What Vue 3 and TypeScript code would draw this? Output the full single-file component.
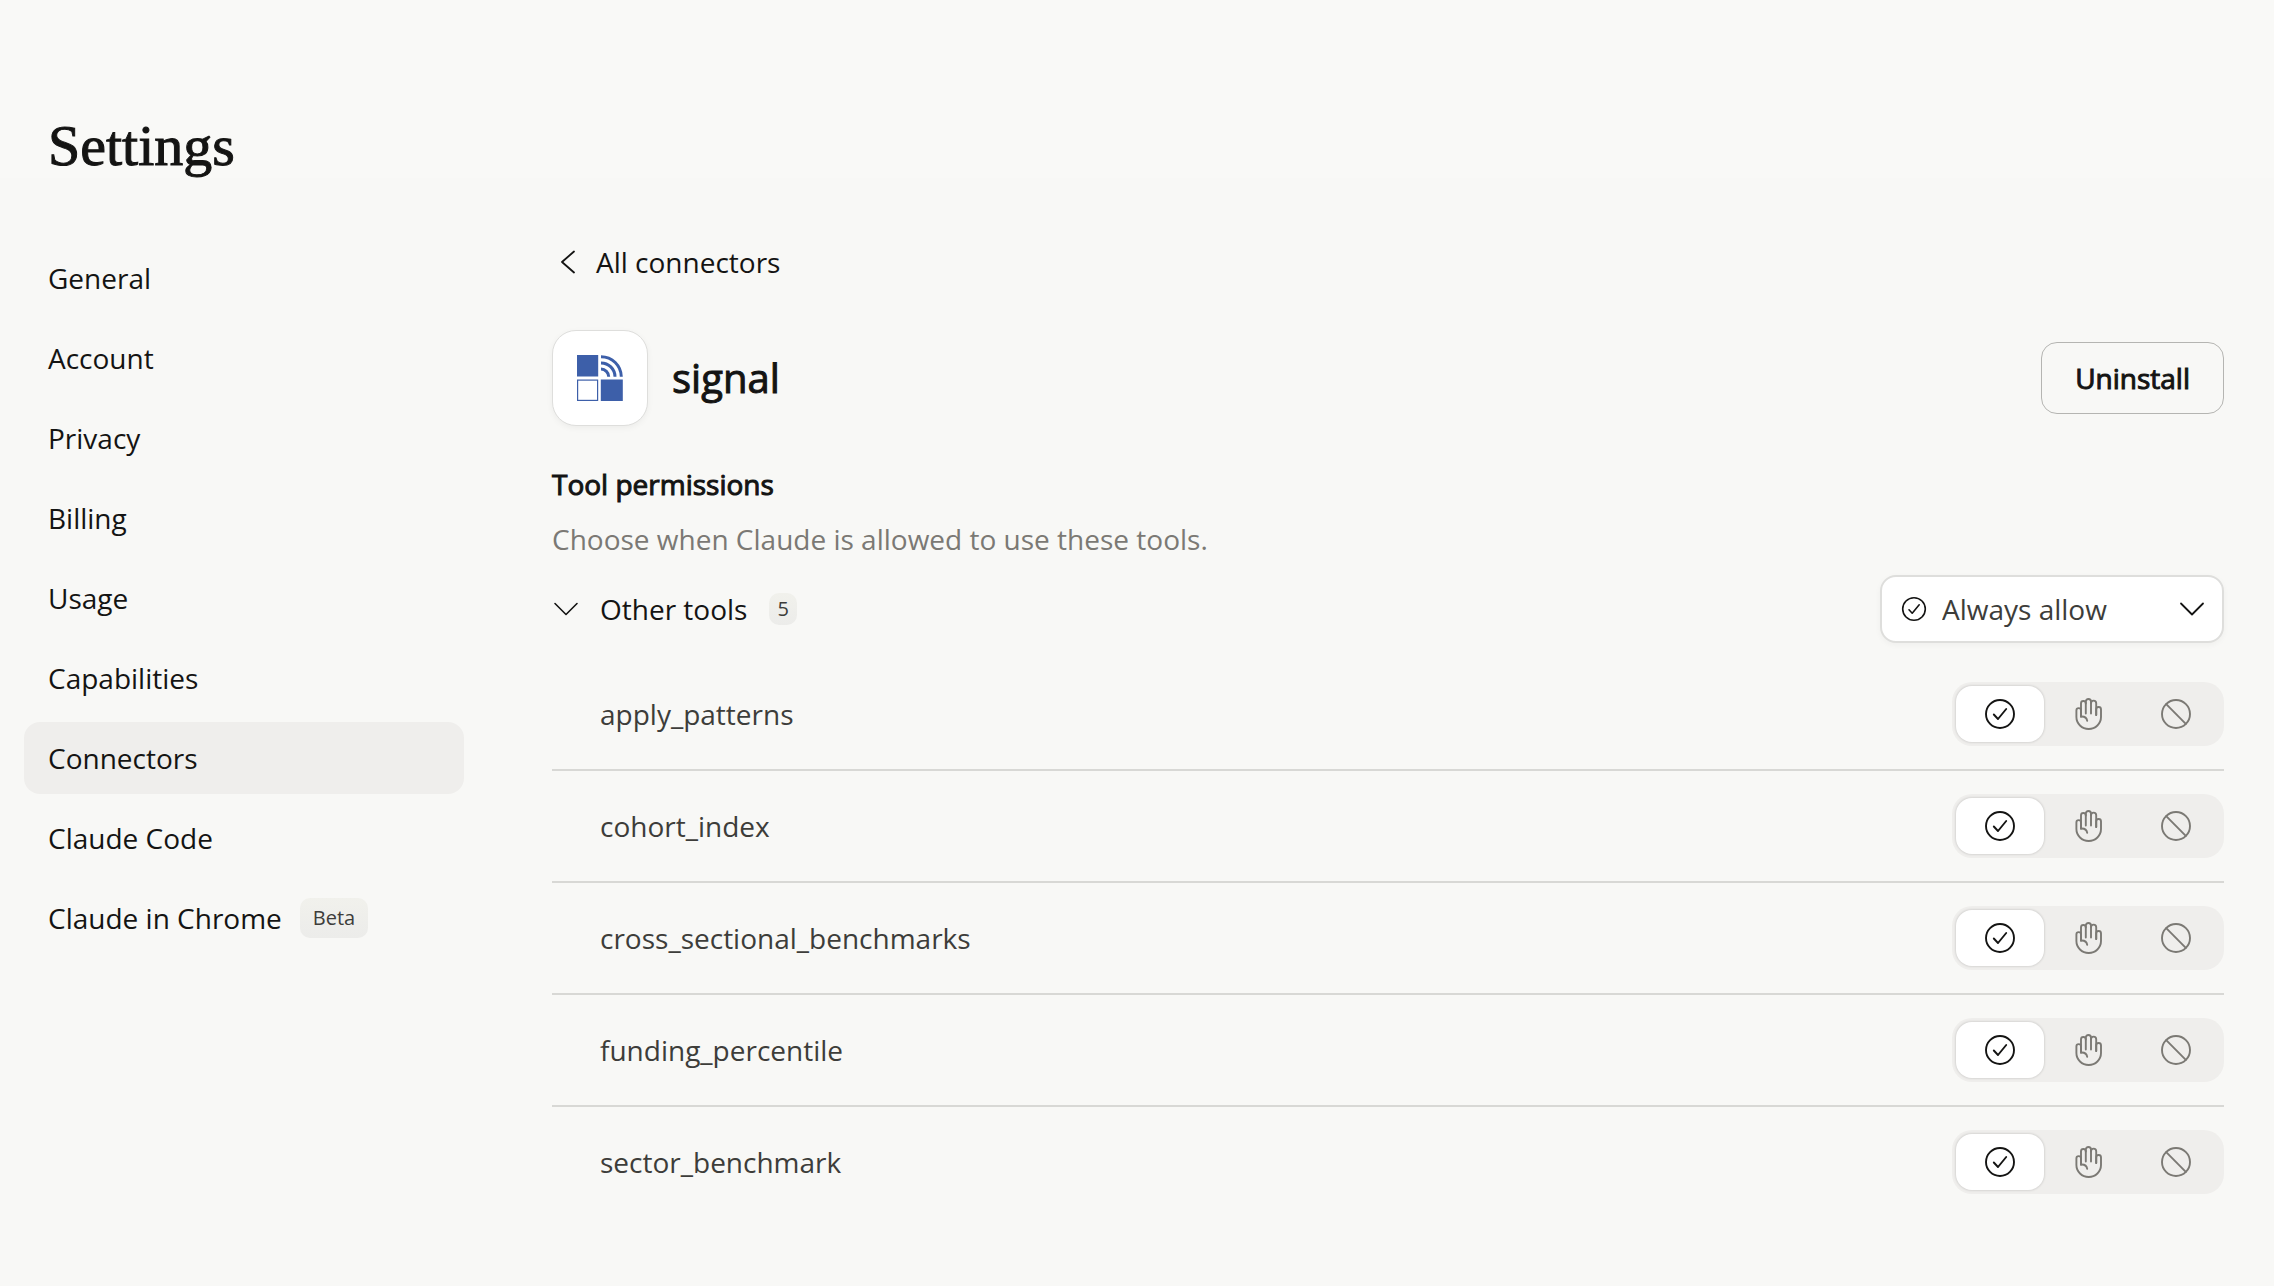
<script setup lang="ts">
import { ref } from 'vue'

type Permission = 'allow' | 'ask' | 'block'

interface NavItem {
  label: string
  href: string
  badge?: string
}

interface Tool {
  name: string
  permission: Permission
}

const navItems: NavItem[] = [
  { label: 'General', href: '#general' },
  { label: 'Account', href: '#account' },
  { label: 'Privacy', href: '#privacy' },
  { label: 'Billing', href: '#billing' },
  { label: 'Usage', href: '#usage' },
  { label: 'Capabilities', href: '#capabilities' },
  { label: 'Connectors', href: '#connectors' },
  { label: 'Claude Code', href: '#claude-code' },
  { label: 'Claude in Chrome', href: '#claude-in-chrome', badge: 'Beta' },
]
const current = ref('Connectors')

const permissions: { value: Permission; label: string }[] = [
  { value: 'allow', label: 'Always allow' },
  { value: 'ask', label: 'Needs approval' },
  { value: 'block', label: 'Blocked' },
]

const tools = ref<Tool[]>([
  { name: 'apply_patterns', permission: 'allow' },
  { name: 'cohort_index', permission: 'allow' },
  { name: 'cross_sectional_benchmarks', permission: 'allow' },
  { name: 'funding_percentile', permission: 'allow' },
  { name: 'sector_benchmark', permission: 'allow' },
])

const groupPermission = ref<Permission>('allow')
const expanded = ref(true)

function applyToAll() {
  tools.value.forEach((tool) => (tool.permission = groupPermission.value))
}
</script>

<template>
  <div class="page">
    <header class="page-header">
      <h1>Settings</h1>
    </header>

    <div class="layout">
      <nav class="sidebar" aria-label="Settings">
        <a
          v-for="item in navItems"
          :key="item.label"
          :href="item.href"
          class="nav-item"
          :class="{ active: item.label === current }"
          @click="current = item.label"
        >
          <span>{{ item.label }}</span>
          <span v-if="item.badge" class="badge">{{ item.badge }}</span>
        </a>
      </nav>

      <main class="content">
        <a href="#connectors" class="back">
          <svg class="icon" viewBox="0 0 32 32" aria-hidden="true">
            <path d="M22 5.5 10 16l12 10.5" stroke-width="1.8" />
          </svg>
          <span>All connectors</span>
        </a>

        <div class="connector">
          <div class="tile">
            <svg class="logo" viewBox="0 0 46 46" aria-hidden="true">
              <rect width="21.2" height="21.5" fill="#3d5fa9" />
              <rect x="23.8" y="24.5" width="22" height="21.5" fill="#3d5fa9" />
              <rect x=".6" y="25.1" width="20" height="20.3" fill="#fff" stroke="#3d5fa9" stroke-width="1.2" />
              <g fill="none" stroke="#3d5fa9" stroke-width="3">
                <path d="M24 1.7a20.3 20.3 0 0 1 20.3 20" />
                <path d="M24 7.9a14 14 0 0 1 14 13.8" />
                <path d="M24 14.1a7.7 7.7 0 0 1 7.7 7.6" />
              </g>
            </svg>
          </div>
          <h2 class="connector-name">signal</h2>
          <button type="button" class="uninstall">Uninstall</button>
        </div>

        <section>
          <h3>Tool permissions</h3>
          <p class="hint">Choose when Claude is allowed to use these tools.</p>

          <div class="group">
            <button type="button" class="group-toggle" :aria-expanded="expanded" @click="expanded = !expanded">
              <svg class="icon" viewBox="0 0 32 32" aria-hidden="true">
                <path d="m3 10.5 11 11 11-11" stroke-width="1.6" />
              </svg>
              <span class="group-name">Other tools</span>
              <span class="count">5</span>
            </button>

            <div class="select-box">
              <svg class="icon select-check" viewBox="0 0 32 32" aria-hidden="true">
                <circle cx="16" cy="16" r="11.3" stroke-width="1.6" />
                <path d="m11 16.8 3.2 3.4 7-8.4" stroke-width="1.6" />
              </svg>
              <select v-model="groupPermission" aria-label="Permission for other tools" @change="applyToAll">
                <option v-for="p in permissions" :key="p.value" :value="p.value">{{ p.label }}</option>
              </select>
              <svg class="icon select-arrow" viewBox="0 0 32 32" aria-hidden="true">
                <path d="m5 10.5 11 11 11-11" stroke-width="1.8" />
              </svg>
            </div>
          </div>

          <ul v-if="expanded" class="tools">
            <li v-for="tool in tools" :key="tool.name" class="tool">
              <span>{{ tool.name }}</span>
              <div class="segments" role="radiogroup" :aria-label="tool.name">
                <label v-for="p in permissions" :key="p.value" class="segment" :class="{ chosen: tool.permission === p.value }">
                  <input v-model="tool.permission" type="radio" :name="tool.name" :value="p.value" :aria-label="p.label" />
                  <svg class="icon" viewBox="0 0 32 32" aria-hidden="true">
                    <g v-if="p.value === 'allow'" stroke-width="1.9">
                      <circle cx="16" cy="16" r="14" />
                      <path d="m9.8 16.5 4.2 4.5 8.2-10" />
                    </g>
                    <g v-else-if="p.value === 'ask'" stroke-width="1.9">
                      <path d="M9 18.5V12.4a2.3 2.3 0 0 0-4.6 0V19a12.3 12 0 0 0 24.6 0v-7.6a2.4 2.4 0 0 0-4.8 0V17" />
                      <path d="M9 18.5V5.4a2.4 2.4 0 0 1 4.8 0V15.5" />
                      <path d="M13.8 5.4V3.6a2.6 2.6 0 0 1 5.2 0v11.9" />
                      <path d="M19 5.2a2.6 2.6 0 0 1 5.2 0V17" />
                      <path d="M9 18.5c3.2-.2 5.8 1.4 6.2 4.4" />
                    </g>
                    <g v-else stroke-width="1.9">
                      <circle cx="16" cy="16" r="14" />
                      <path d="m6.2 6.2 19.6 19.6" />
                    </g>
                  </svg>
                </label>
              </div>
            </li>
          </ul>
        </section>
      </main>
    </div>
  </div>
</template>

<style>
body {
  background: #f8f8f6;
}
</style>

<style scoped>
.page {
  min-height: 100vh;
  box-sizing: border-box;
  background: #f8f8f6;
  color: #141413;
  font-family: 'Open Sans', 'Noto Sans', sans-serif;
  font-size: 28px;
  line-height: 40px;
}

.page-header {
  padding: 114px 48px 0;
  background: #f9f9f7;
}

h1,
h2,
h3,
p,
ul {
  margin: 0;
  padding: 0;
}

h1 {
  font-family: 'Liberation Serif', serif;
  font-size: 58px;
  font-weight: 400;
  line-height: 64px;
  -webkit-text-stroke: 1px #141413;
}

a {
  color: inherit;
  text-decoration: none;
}

button,
select {
  color: inherit;
  font: inherit;
}

.icon {
  flex: none;
  width: 32px;
  height: 32px;
  fill: none;
  stroke: currentColor;
  stroke-linecap: round;
  stroke-linejoin: round;
}

.layout {
  display: flex;
  gap: 88px;
  padding: 64px 50px 64px 24px;
}

.sidebar {
  display: flex;
  flex: none;
  flex-direction: column;
  gap: 8px;
  width: 440px;
}

.nav-item {
  display: flex;
  align-items: center;
  gap: 18px;
  padding: 16px 24px;
  border-radius: 16px;
}

.nav-item.active {
  background: #efeeec;
}

.badge,
.count {
  border-radius: 10px;
  background: linear-gradient(#f1f1ec, #ececea);
  color: #3d3d3a;
  font-size: 20px;
}

.badge {
  padding: 0 13px;
}

.content {
  flex: 1;
  min-width: 0;
}

.back {
  display: flex;
  align-items: center;
  gap: 12px;
  width: fit-content;
}

.connector {
  display: flex;
  align-items: center;
  margin: 48px 0 38px;
}

.tile {
  display: flex;
  align-items: center;
  justify-content: center;
  width: 94px;
  height: 94px;
  border: 1px solid #dededc;
  border-radius: 24px;
  background: #fff;
  box-shadow: 0 2px 6px rgba(0, 0, 0, 0.05);
}

.logo {
  width: 46px;
  height: 46px;
}

.connector-name {
  flex: 1;
  margin-left: 24px;
  font-size: 40px;
  font-weight: 400;
}

/* A hairline stroke gives the medium weight between regular and semibold. */
.connector-name,
.uninstall,
h3 {
  -webkit-text-stroke: 1px #141413;
}

.uninstall {
  height: 72px;
  padding: 0 33px;
  border: 1px solid #b5b5b2;
  border-radius: 16px;
  background: none;
}

h3 {
  font-size: 28px;
  font-weight: 400;
}

.hint {
  margin-top: 15px;
  color: #7b7974;
}

.group {
  display: flex;
  align-items: center;
  justify-content: space-between;
  margin: 16px 0;
}

.group-toggle {
  display: flex;
  align-items: center;
  padding: 0;
  border: 0;
  background: none;
}

.group-name {
  margin: 0 22px 0 16px;
}

.count {
  padding: 0 8px;
  line-height: 32px;
}

.select-box {
  position: relative;
  width: 344px;
}

.select-box select {
  display: block;
  width: 100%;
  height: 68px;
  padding: 0 64px 0 60px;
  border: 2px solid #dededc;
  border-radius: 16px;
  appearance: none;
  background: #fff;
  box-shadow: 0 2px 6px rgba(0, 0, 0, 0.04);
  color: #3d3d3a;
}

.select-check,
.select-arrow {
  position: absolute;
  top: 18px;
  pointer-events: none;
}

.select-check {
  left: 18px;
}

.select-arrow {
  right: 16px;
}

.tools {
  list-style: none;
}

.tool {
  display: flex;
  align-items: center;
  justify-content: space-between;
  padding: 23px 0 23px 48px;
  color: #3d3d3a;
}

.tool + .tool {
  border-top: 2px solid #d8d8d5;
}

.segments {
  display: flex;
  padding: 4px;
  border-radius: 20px;
  background: #efeeec;
}

.segment {
  display: flex;
  position: relative;
  align-items: center;
  justify-content: center;
  width: 88px;
  height: 56px;
  border-radius: 16px;
  color: #7b7974;
}

.segment.chosen {
  background: #fff;
  box-shadow: 0 0 2px 1px rgba(0, 0, 0, 0.1);
  color: #141413;
}

.segment input {
  position: absolute;
  inset: 0;
  width: 100%;
  height: 100%;
  margin: 0;
  opacity: 0;
}
</style>
